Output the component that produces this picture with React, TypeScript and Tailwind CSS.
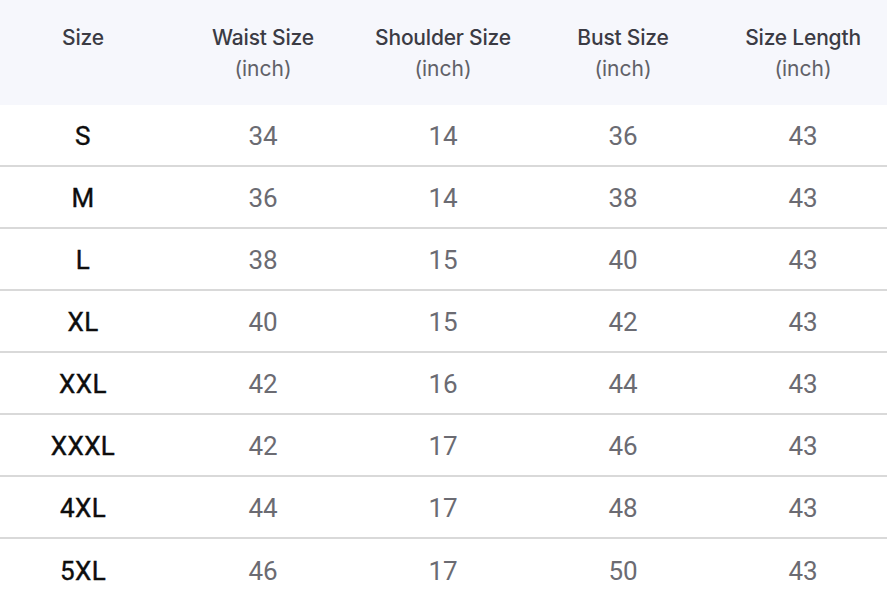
const HEADERS = ["Size", "Waist Size", "Shoulder Size", "Bust Size", "Size Length"];

const ROWS: [string, number, number, number, number][] = [
  ["S", 34, 14, 36, 43],
  ["M", 36, 14, 38, 43],
  ["L", 38, 15, 40, 43],
  ["XL", 40, 15, 42, 43],
  ["XXL", 42, 16, 44, 43],
  ["XXXL", 42, 17, 46, 43],
  ["4XL", 44, 17, 48, 43],
  ["5XL", 46, 17, 50, 43],
];

export default function App() {
  return (
    <div className="h-[610px] w-[887px] overflow-hidden bg-white">
      <div className="-ml-[7px] w-[900px]">
        {/* header */}
        <div className="grid h-[105px] grid-cols-5 items-start bg-[#f6f7fc] pt-[22px] font-['Inter','Roboto',sans-serif] text-[21px] leading-[31px]">
          {HEADERS.map((h, i) => (
            <div key={h} className="flex flex-col items-center">
              <span className="font-medium tracking-[-0.2px] text-[#3b3b44]">{h}</span>
              {i > 0 && <span className="text-[#616168]">(inch)</span>}
            </div>
          ))}
        </div>

        {/* rows */}
        {ROWS.map((r, idx) => (
          <div
            key={r[0]}
            className={`grid h-[62px] grid-cols-5 items-center pt-[2px] font-['Roboto',sans-serif] leading-none ${
              idx < ROWS.length - 1 ? "border-b-2 border-[#d9d9d9]" : ""
            }`}
          >
            <span className="text-center text-[26px] font-normal tracking-[0.4px] text-[#0d0d0d] [-webkit-text-stroke:0.4px_#0d0d0d]">
              {r[0]}
            </span>
            {r.slice(1).map((v, j) => (
              <span key={j} className="text-center text-[26px] text-[#6b6b72]">
                {v}
              </span>
            ))}
          </div>
        ))}
      </div>
    </div>
  );
}
